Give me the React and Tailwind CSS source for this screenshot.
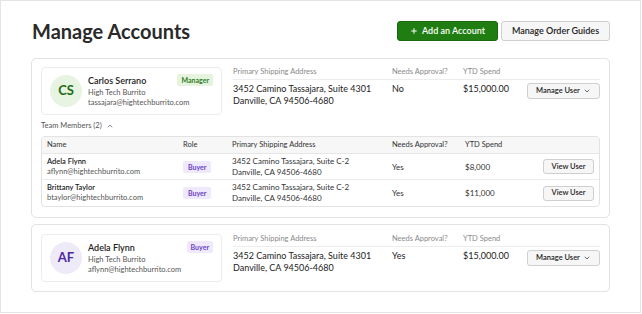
import { ChevronDown, ChevronUp, Plus } from 'lucide-react'

const members = [
  { name: 'Adela Flynn', email: 'aflynn@hightechburrito.com', approval: 'Yes', spend: '$8,000' },
  { name: 'Brittany Taylor', email: 'btaylor@hightechburrito.com', approval: 'Yes', spend: '$11,000' },
]

const UserCard = ({ initials, name, email, role, tone }) => {
  const green = tone === 'green'
  return (
    <div className="w-[181px] h-[48px] shrink-0 flex items-center gap-[6px] px-[8px] rounded-[4px] border border-[#ececec]">
      <div
        className={`w-[32px] h-[32px] rounded-full flex items-center justify-center text-[13px] font-bold ${
          green ? 'bg-[#e7f4e2] text-[#1e6a12]' : 'bg-[#eeeaf8] text-[#4a2aa0]'
        }`}
      >
        {initials}
      </div>
      <div className="flex-1 min-w-0">
        <div className="flex items-start justify-between">
          <span className="text-[9px] font-semibold text-[#222] leading-[12px] mt-[1px]">{name}</span>
          <span
            className={`px-[4px] h-[12px] leading-[12px] rounded-[2px] text-[7px] font-bold ${
              green ? 'bg-[#e6f3df] text-[#2f7c1f]' : 'bg-[#efe9fb] text-[#6a40c8]'
            }`}
          >
            {role}
          </span>
        </div>
        <div className="text-[7.5px] text-[#555] leading-[10px] mt-[1px]">High Tech Burrito</div>
        <div className="text-[7.5px] text-[#555] leading-[10px]">{email}</div>
      </div>
    </div>
  )
}

const SummaryRow = ({ card, approval }) => (
  <div className="flex">
    {card}
    <div className="flex-1 ml-[11px]">
      <div className="flex h-[13px] border-b border-[#ededed] text-[7.5px] text-[#8a8a8a] leading-[10px]">
        <div className="w-[159px]">Primary Shipping Address</div>
        <div className="w-[71px]">Needs Approval?</div>
        <div className="w-[64px]">YTD Spend</div>
      </div>
      <div className="flex pt-[3px] text-[9px] text-[#222] leading-[12px]">
        <div className="w-[159px]">
          <div>3452 Camino Tassajara, Suite 4301</div>
          <div>Danville, CA 94506-4680</div>
        </div>
        <div className="w-[71px]">{approval}</div>
        <div className="w-[64px]">$15,000.00</div>
        <div className="flex-1 flex justify-end">
          <button className="w-[73px] h-[16px] rounded-[3px] border border-[#cfcfcf] bg-[#f6f6f6] text-[7.5px] font-semibold text-[#222] flex items-center justify-center gap-[3px]">
            Manage User <ChevronDown size={8} strokeWidth={2} />
          </button>
        </div>
      </div>
    </div>
  </div>
)

export default function App() {
  return (
    <div className="w-[642px] h-[314px] bg-white" style={{ fontFamily: 'Lato, "Open Sans", sans-serif' }}>
      <div className="w-[641px] h-[313px] border border-[#e4e4e4] px-[30px] pt-[20px]">

        {/* Header */}
        <div className="flex items-center justify-between h-[20px]">
          <h1 className="text-[20px] font-bold text-[#2a2a2a] ml-[1px]">Manage Accounts</h1>
          <div className="flex gap-[3px]">
            <button className="w-[101px] h-[20px] rounded-[3px] bg-[#1f7d11] border border-[#19680d] text-white text-[9px] font-semibold flex items-center justify-center gap-[4px]">
              <Plus size={8} strokeWidth={3} /> Add an Account
            </button>
            <button className="w-[109px] h-[20px] rounded-[3px] bg-[#f6f6f6] border border-[#cfcfcf] text-[#222] text-[9px] font-semibold">
              Manage Order Guides
            </button>
          </div>
        </div>

        {/* Manager card */}
        <div className="mt-[17px] rounded-[5px] border border-[#e2e2e2] px-[9px] pt-[8px] pb-[10px]">
          <SummaryRow
            card={<UserCard initials="CS" name="Carlos Serrano" email="tassajara@hightechburrito.com" role="Manager" tone="green" />}
            approval="No"
          />

          <div className="flex items-center gap-[4px] mt-[6px] h-[10px] text-[7.5px] text-[#555]">
            Team Members (2) <ChevronUp size={8} strokeWidth={2} />
          </div>

          <div className="mt-[5px] rounded-[4px] border border-[#e2e2e2] overflow-hidden">
            <div className="flex items-center h-[17px] bg-[#f7f7f7] border-b border-[#e6e6e6] px-[5px] text-[7.5px] text-[#333]">
              <div className="w-[136px]">Name</div>
              <div className="w-[49px]">Role</div>
              <div className="w-[160px]">Primary Shipping Address</div>
              <div className="w-[73px]">Needs Approval?</div>
              <div>YTD Spend</div>
            </div>
            {members.map((m, i) => (
              <div
                key={m.name}
                className={`flex items-center h-[26px] px-[5px] text-[8px] text-[#333] ${i === 0 ? 'border-b border-[#ececec]' : ''}`}
              >
                <div className="w-[136px] leading-[10px] text-[7.5px]">
                  <div className="font-semibold text-[#222]">{m.name}</div>
                  <div className="text-[#555]">{m.email}</div>
                </div>
                <div className="w-[49px]">
                  <span className="inline-block px-[5px] h-[12px] leading-[12px] rounded-[2px] bg-[#efe9fb] text-[#6a40c8] font-bold text-[7px]">
                    Buyer
                  </span>
                </div>
                <div className="w-[160px] leading-[11px]">
                  <div>3452 Camino Tassajara, Suite C-2</div>
                  <div>Danville, CA 94506-4680</div>
                </div>
                <div className="w-[73px]">{m.approval}</div>
                <div className="flex-1">{m.spend}</div>
                <button className="w-[51px] h-[15px] rounded-[3px] border border-[#cfcfcf] bg-[#f6f6f6] text-[7.5px] font-semibold text-[#222]">
                  View User
                </button>
              </div>
            ))}
          </div>
        </div>

        {/* Buyer card */}
        <div className="mt-[6px] rounded-[5px] border border-[#e2e2e2] px-[9px] pt-[9px] pb-[9px]">
          <SummaryRow
            card={<UserCard initials="AF" name="Adela Flynn" email="aflynn@hightechburrito.com" role="Buyer" tone="purple" />}
            approval="Yes"
          />
        </div>
      </div>
    </div>
  )
}
